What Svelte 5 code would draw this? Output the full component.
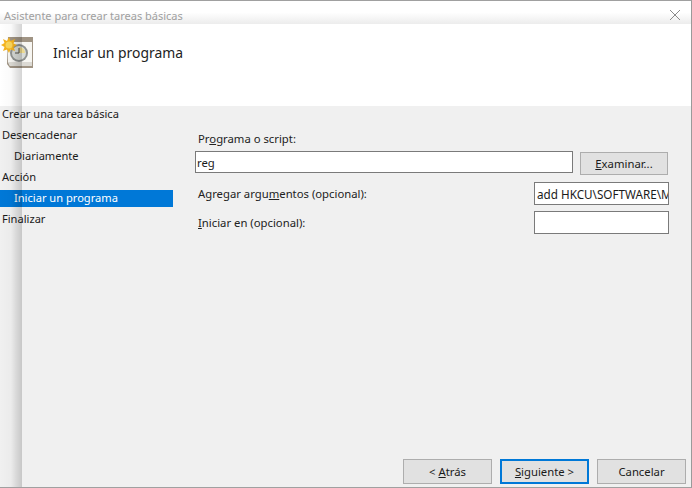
<script>
  const steps = [
    { label: 'Crear una tarea básica' },
    { label: 'Desencadenar' },
    { label: 'Diariamente', sub: true },
    { label: 'Acción' },
    { label: 'Iniciar un programa', sub: true, active: true },
    { label: 'Finalizar' },
  ];
</script>

<div class="wizard">
  <div class="titlebar">
    <span class="title">Asistente para crear tareas básicas</span>
    <svg class="close" width="10" height="10" viewBox="0 0 10 10">
      <path d="M0 0 L10 10 M10 0 L0 10" stroke="#8a8a8a" stroke-width="1" fill="none" />
    </svg>
  </div>

  <div class="header">
    <svg class="icon" width="34" height="34" viewBox="0 0 34 34">
      <path d="M7 0 H32 V31 H9 L6 27 Z" fill="#a09484" />
      <path d="M7 5 H31 V29 H9 L7 25 Z" fill="#f7f6f2" />
      <path d="M7 25 H31 V29 H9 Z" fill="#dcdad4" />
      <circle cx="18" cy="16" r="9" fill="#8f9290" />
      <circle cx="18" cy="16" r="7" fill="#d9dcd8" />
      <path d="M18 16 V10 A6 6 0 0 1 24 16 Z" fill="#ecd98e" />
      <path d="M18 11 V16 H14" stroke="#55524a" stroke-width="1" fill="none" />
      <path d="M8 0 L9.5 4 L14 2 L12.5 6.5 L16 8 L12.5 10 L14 14 L9.5 12.5 L8 16 L6 12.5 L2 14 L3.5 10 L0 8 L3.5 6 L2 2 L6 4 Z" fill="#f5b31f" />
      <circle cx="8" cy="8" r="3.5" fill="#fbd65a" />
    </svg>
    <h1>Iniciar un programa</h1>
  </div>

  <div class="body">
    <ul class="steps">
      {#each steps as step}
        <li class:sub={step.sub} class:active={step.active}>{step.label}</li>
      {/each}
    </ul>

    <div class="content">
      <div class="form">
        <label class="top-label" for="prog">Pr<u>o</u>grama o script:</label>
        <div class="row prog-row">
          <input id="prog" class="prog" value="reg" />
          <button class="btn browse"><u>E</u>xaminar...</button>
        </div>
        <div class="row arg-row">
          <label for="args">Agregar argu<u>m</u>entos (opcional):</label>
          <input id="args" class="short" value="add HKCU\SOFTWARE\Microsoft" />
        </div>
        <div class="row start-row">
          <label for="start"><u>I</u>niciar en (opcional):</label>
          <input id="start" class="short" value="" />
        </div>
      </div>

      <div class="actions">
        <button class="btn">&lt; <u>A</u>trás</button>
        <button class="btn primary"><u>S</u>iguiente &gt;</button>
        <button class="btn">Cancelar</button>
      </div>
    </div>
  </div>

  <div class="shadow"></div>
</div>

<style>
  :global(body) { margin: 0; background: #fff; }
  .wizard {
    position: relative;
    width: 692px;
    height: 488px;
    box-sizing: border-box;
    display: flex;
    flex-direction: column;
    border-top: 1px solid #a0a0a0;
    border-right: 1px solid #9a9a9a;
    border-bottom: 1px solid #a0a0a0;
    font-family: "Noto Sans", sans-serif;
    font-size: 11.1px;
    color: #1a1a1a;
    overflow: hidden;
  }
  .titlebar {
    height: 23px;
    display: flex;
    justify-content: space-between;
    align-items: center;
    padding: 0 11px 0 4px;
    background: linear-gradient(#fff 50%, #ececec);
    flex: none;
  }
  .title { color: #a0a0a0; font-size: 11px; margin-top: 5px; }
  .close { margin-top: 5px; }
  .header {
    height: 82px;
    flex: none;
    background: #fff;
    display: flex;
    align-items: flex-start;
    position: relative;
  }
  .icon { margin: 13px 0 0 1px; flex: none; }
  .header h1 {
    margin: 19px 0 0 18px;
    font-size: 13.9px;
    font-weight: 400;
    line-height: 20px;
    color: #222;
  }
  .body {
    flex: 1;
    display: flex;
    background: #f0f0f0;
    min-height: 0;
  }
  .steps {
    list-style: none;
    margin: 0;
    padding: 0;
    width: 173px;
    flex: none;
    display: flex;
    flex-direction: column;
    gap: 4px;
  }
  .steps li {
    height: 17px;
    line-height: 16px;
    padding-left: 2px;
    white-space: nowrap;
  }
  .steps li.sub { padding-left: 14px; }
  .steps li.active { background: #0078d7; color: #fff; }
  .content {
    flex: 1;
    display: flex;
    flex-direction: column;
    justify-content: space-between;
    padding: 0 5px 3px 22px;
    min-width: 0;
    font-size: 11.3px;
  }
  .form { display: flex; flex-direction: column; padding-right: 18px; }
  label { color: #222; }
  .top-label { margin: 24px 0 0 3px; height: 17px; line-height: 17px; }
  .row { display: flex; align-items: flex-start; justify-content: space-between; }
  .row label { padding: 4px 0 0 3px; }
  .prog-row { margin-top: 4px; gap: 7px; }
  .arg-row { margin-top: 7px; }
  .start-row { margin-top: 6px; }
  input {
    box-sizing: border-box;
    height: 23px;
    border: 1px solid #7a7a7a;
    background: #fff;
    font: inherit;
    color: #1a1a1a;
    padding: 0 0 0 1px;
    outline: none;
    border-radius: 0;
  }
  .prog { flex: 1; min-width: 0; height: 22px; }
  .short { width: 135px; margin-right: -1px; padding-left: 2px; font-size: 11.7px; }
  .btn {
    box-sizing: border-box;
    width: 89px;
    height: 25px;
    border: 1px solid #adadad;
    background: #e1e1e1;
    font: inherit;
    color: #1a1a1a;
    padding: 0;
  }
  .browse { width: 88px; height: 23px; flex: none; margin-top: 1px; }
  .actions { display: flex; justify-content: flex-end; gap: 8px; }
  .primary { border: 2px solid #0078d7; }
  .shadow {
    position: absolute;
    top: 23px;
    bottom: 0;
    left: 0;
    width: 22px;
    pointer-events: none;
    background: linear-gradient(to right, rgba(0,0,0,0) 0, rgba(0,0,0,0.02) 50%, rgba(0,0,0,0.1) 75%, rgba(0,0,0,0.17) 100%);
  }
</style>
